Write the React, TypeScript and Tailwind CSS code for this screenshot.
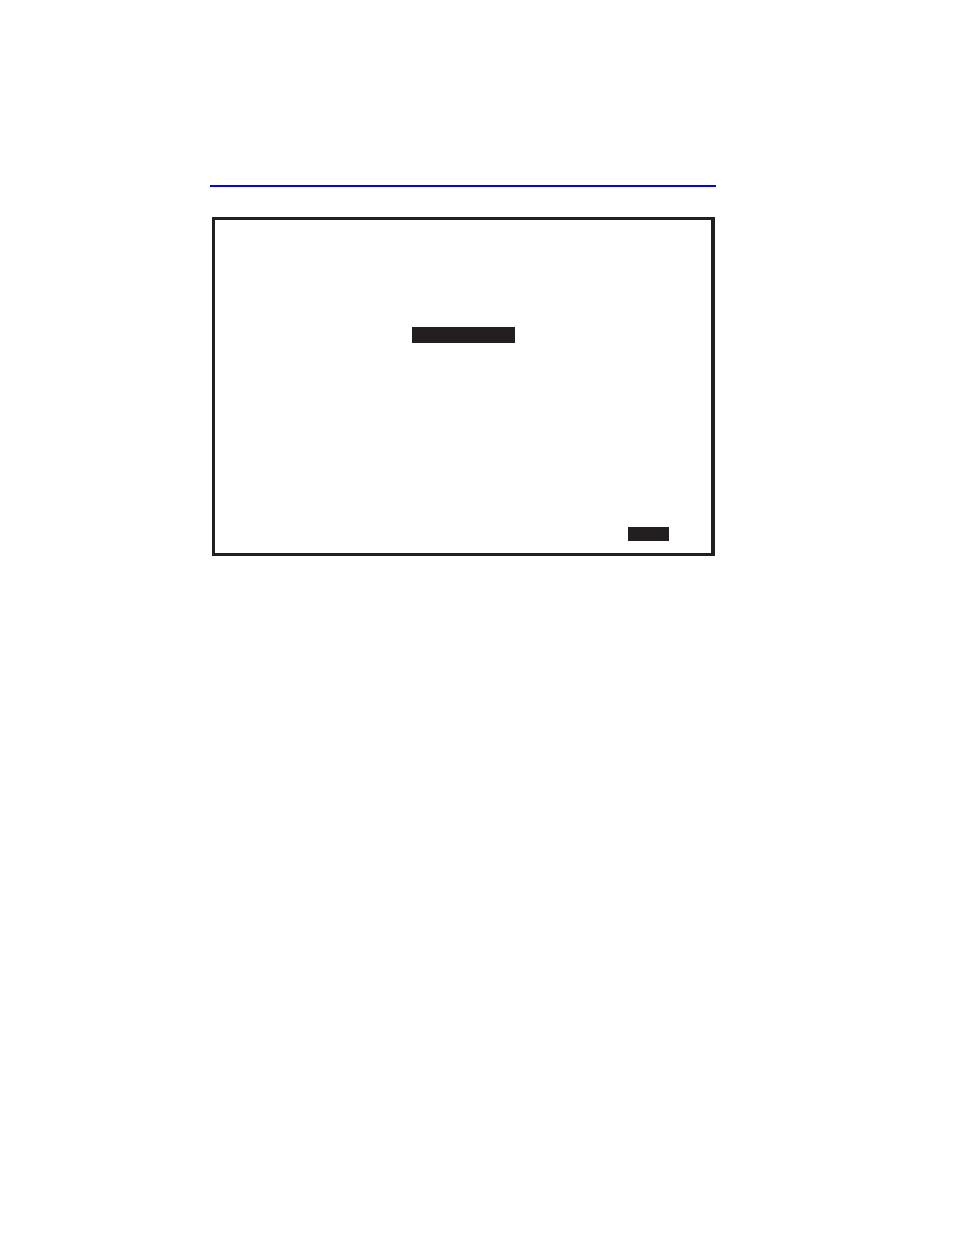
function MenuScreen() {
  return (
    <section className="mt-[30px] ml-[2px] mr-px flex flex-col border-3 border-r-4 border-[#231f20] pt-[107px] pr-[42px] pb-3">
      {/* highlighted row, centred on the full width of the screen */}
      <div className="-mr-[42px] flex justify-center">
        <div className="h-4 w-[103px] bg-[#231f20]" />
      </div>
      <div className="mt-[184px] h-[14px] w-[41px] self-end bg-[#231f20]" />
    </section>
  );
}

export default function App() {
  return (
    <main className="min-h-screen bg-white pt-[185px] pr-[238px] pl-[210px]">
      <hr className="border-t-2 border-[#0000ff]" />
      <MenuScreen />
    </main>
  );
}
